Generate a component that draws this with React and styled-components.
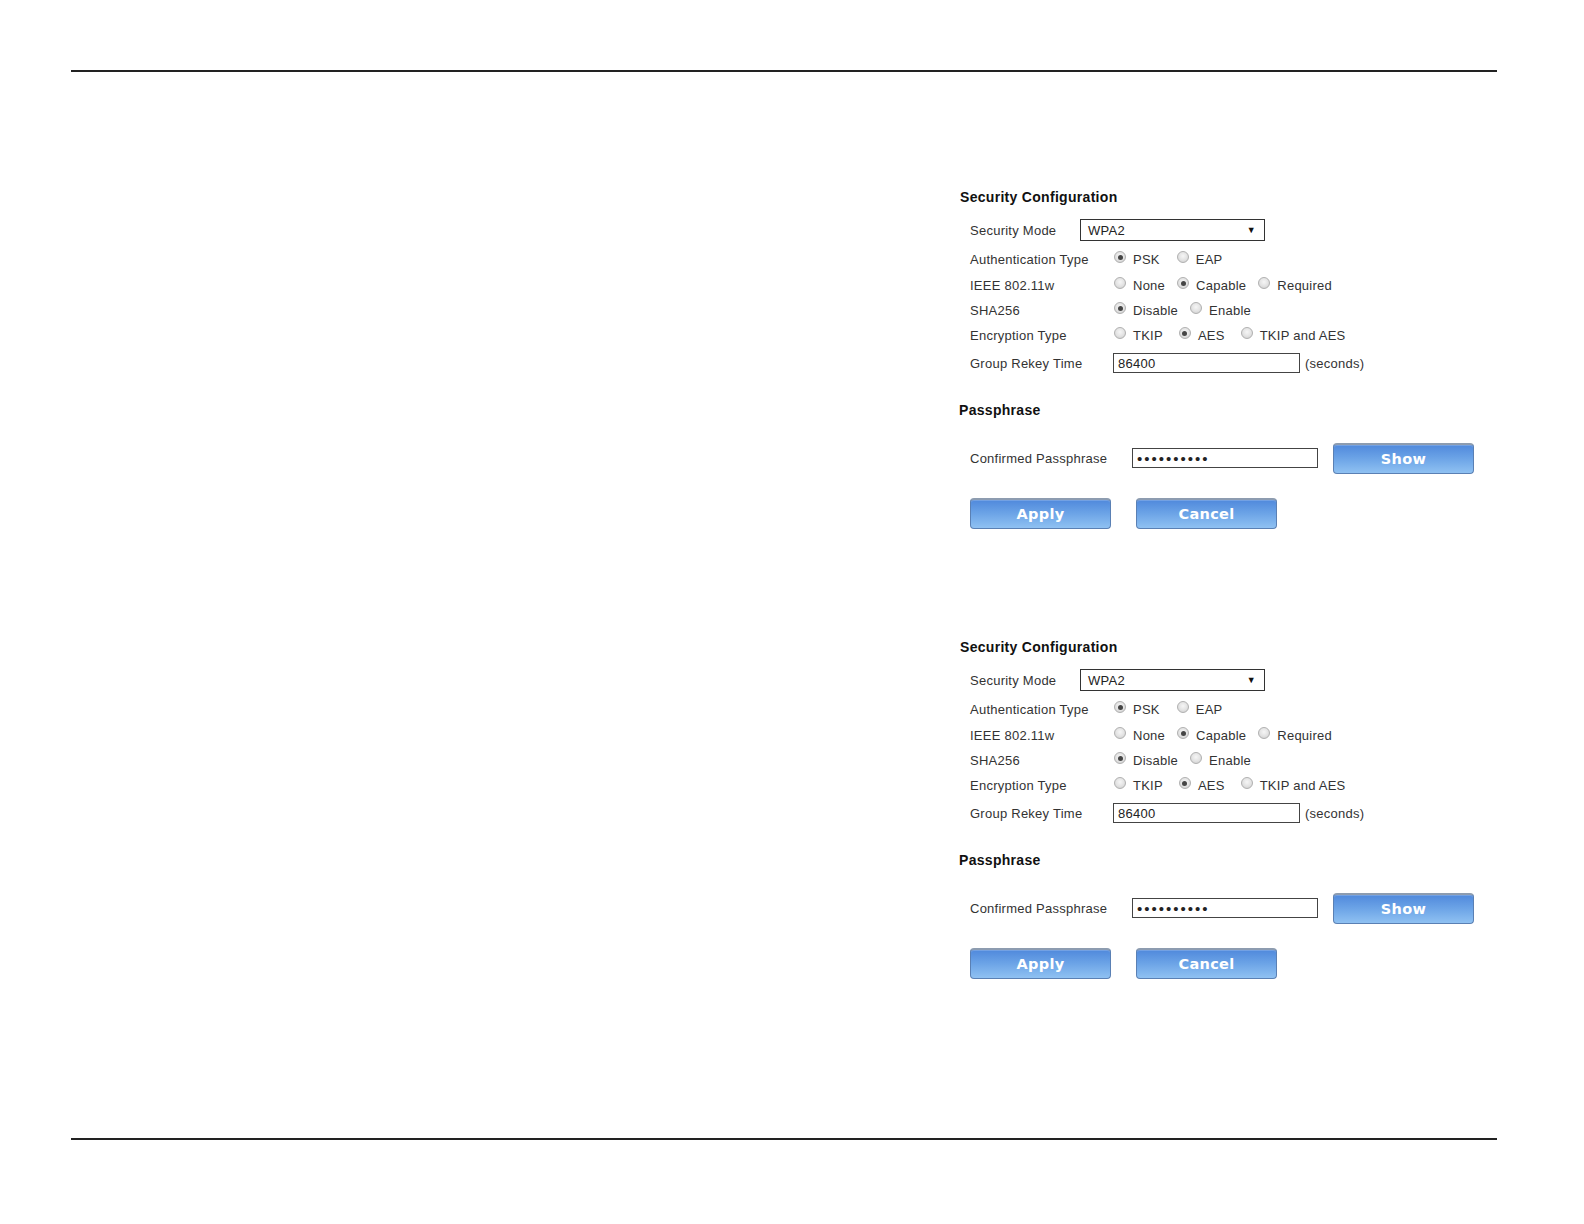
import React from 'react';
import styled, { createGlobalStyle } from 'styled-components';

const GlobalStyle = createGlobalStyle`
  html, body {
    margin: 0;
    padding: 0;
    background: #ffffff;
    overflow: hidden;
  }
  body {
    font-family: "Liberation Sans", Arial, sans-serif;
    color: #333;
  }
`;

const Page = styled.div`
  height: 100vh;
  padding-top: 70px;
  box-sizing: border-box;
  display: flex;
  flex-direction: column;
`;

const Rule = styled.div`
  margin: 0 87px 0 71px;
  height: 2px;
  flex-shrink: 0;
  background: #222;
`;

const Content = styled.main`
  flex: 1;
  display: flex;
  flex-direction: column;
  padding-left: 959px;
  padding-top: 115px;
`;

const Panel = styled.section`
  display: flex;
  flex-direction: column;
  margin-bottom: 108px;
`;

const SectionTitle = styled.h2`
  margin: ${p => p.$top || 0}px 0 0 ${p => p.$indent || 0}px;
  height: 20px;
  line-height: 20px;
  font-size: 14px;
  font-weight: bold;
  color: #111;
  letter-spacing: 0.3px;
`;

const Row = styled.div`
  display: flex;
  align-items: center;
  height: ${p => p.$h || 24}px;
  margin-top: ${p => p.$top || 0}px;
  padding-left: 11px;
  font-size: 13px;
  letter-spacing: 0.25px;
`;

const Label = styled.div`
  width: ${p => p.$w}px;
  flex-shrink: 0;
  color: #333;
`;

const Select = styled.div`
  width: 168px;
  height: 20px;
  border: 1.5px solid #333;
  display: flex;
  align-items: center;
  justify-content: space-between;
  padding: 0 8px 0 7px;
  box-sizing: content-box;
  color: #222;
`;

const Arrow = styled.span`
  font-size: 9px;
  color: #111;
`;

const RadioGroup = styled.div`
  display: flex;
  align-items: center;
`;

const Option = styled.label`
  display: flex;
  align-items: center;
  margin-right: ${p => p.$gap}px;
  color: #333;
`;

const Dot = styled.span`
  width: 12px;
  height: 12px;
  border-radius: 50%;
  box-sizing: border-box;
  border: 1px solid #b0b0b0;
  background: radial-gradient(circle at 50% 40%, #f6f6f6 0%, #e2e2e2 55%, #c8c8c8 100%);
  margin-right: 7px;
  margin-top: -4px;
  display: flex;
  align-items: center;
  justify-content: center;
  &::after {
    content: '';
    width: 5px;
    height: 5px;
    border-radius: 50%;
    background: ${p => (p.$on ? '#454545' : 'transparent')};
  }
`;

const TextField = styled.div`
  width: ${p => p.$w}px;
  height: 18px;
  border: 1px solid #444;
  display: flex;
  align-items: center;
  padding-left: 4px;
  color: #222;
  box-sizing: content-box;
  letter-spacing: ${p => p.$spacing || 0.25}px;
  font-size: ${p => p.$fs || 13}px;
`;

const Hint = styled.span`
  margin-left: 5px;
  color: #333;
`;

const BlueButton = styled.button`
  width: 141px;
  height: 31px;
  margin-left: ${p => p.$ml || 0}px;
  border: 1px solid #5a80b4;
  border-top: 2px solid #8d9cb0;
  border-radius: 4px;
  background: linear-gradient(to bottom, #5089dc 0%, #6aa2e6 45%, #8fc1f2 100%);
  box-shadow: inset 0 1px 0 rgba(255, 255, 255, 0.2);
  color: #ffffff;
  font-family: "DejaVu Sans", Verdana, sans-serif;
  font-weight: bold;
  font-size: 14.5px;
  letter-spacing: 0.3px;
  display: flex;
  align-items: center;
  justify-content: center;
  padding: 0;
  cursor: pointer;
`;

const ButtonRow = styled.div`
  display: flex;
  margin-top: ${p => p.$top}px;
  padding-left: 11px;
`;

const radios = [
  { label: 'Authentication Type', top: 5, opts: [['PSK', true, 17], ['EAP', false, 0]] },
  { label: 'IEEE 802.11w', top: 2, opts: [['None', false, 12], ['Capable', true, 12], ['Required', false, 0]] },
  { label: 'SHA256', top: 1, opts: [['Disable', true, 12], ['Enable', false, 0]] },
  { label: 'Encryption Type', top: 1, opts: [['TKIP', false, 16], ['AES', true, 16], ['TKIP and AES', false, 0]] },
];

function SecurityPanel() {
  return (
    <Panel>
      <SectionTitle $indent={1}>Security Configuration</SectionTitle>
      <Row $top={11}>
        <Label $w={110}>Security Mode</Label>
        <Select>
          <span>WPA2</span>
          <Arrow>▼</Arrow>
        </Select>
      </Row>
      {radios.map(r => (
        <Row key={r.label} $top={r.top}>
          <Label $w={144}>{r.label}</Label>
          <RadioGroup>
            {r.opts.map(([text, on, gap]) => (
              <Option key={text} $gap={gap}>
                <Dot $on={on} />
                {text}
              </Option>
            ))}
          </RadioGroup>
        </Row>
      ))}
      <Row $top={4}>
        <Label $w={143}>Group Rekey Time</Label>
        <TextField $w={181}>86400</TextField>
        <Hint>(seconds)</Hint>
      </Row>
      <SectionTitle $top={25}>Passphrase</SectionTitle>
      <Row $top={23} $h={30}>
        <Label $w={162}>Confirmed Passphrase</Label>
        <TextField $w={180} $fs={15} $spacing={2}>••••••••••</TextField>
        <BlueButton $ml={15}>Show</BlueButton>
      </Row>
      <ButtonRow $top={25}>
        <BlueButton>Apply</BlueButton>
        <BlueButton $ml={25}>Cancel</BlueButton>
      </ButtonRow>
    </Panel>
  );
}

function App() {
  return (
    <Page>
      <GlobalStyle />
      <Rule />
      <Content>
        <SecurityPanel />
        <SecurityPanel />
      </Content>
      <Rule style={{ marginBottom: 84 }} />
    </Page>
  );
}

export default App;
